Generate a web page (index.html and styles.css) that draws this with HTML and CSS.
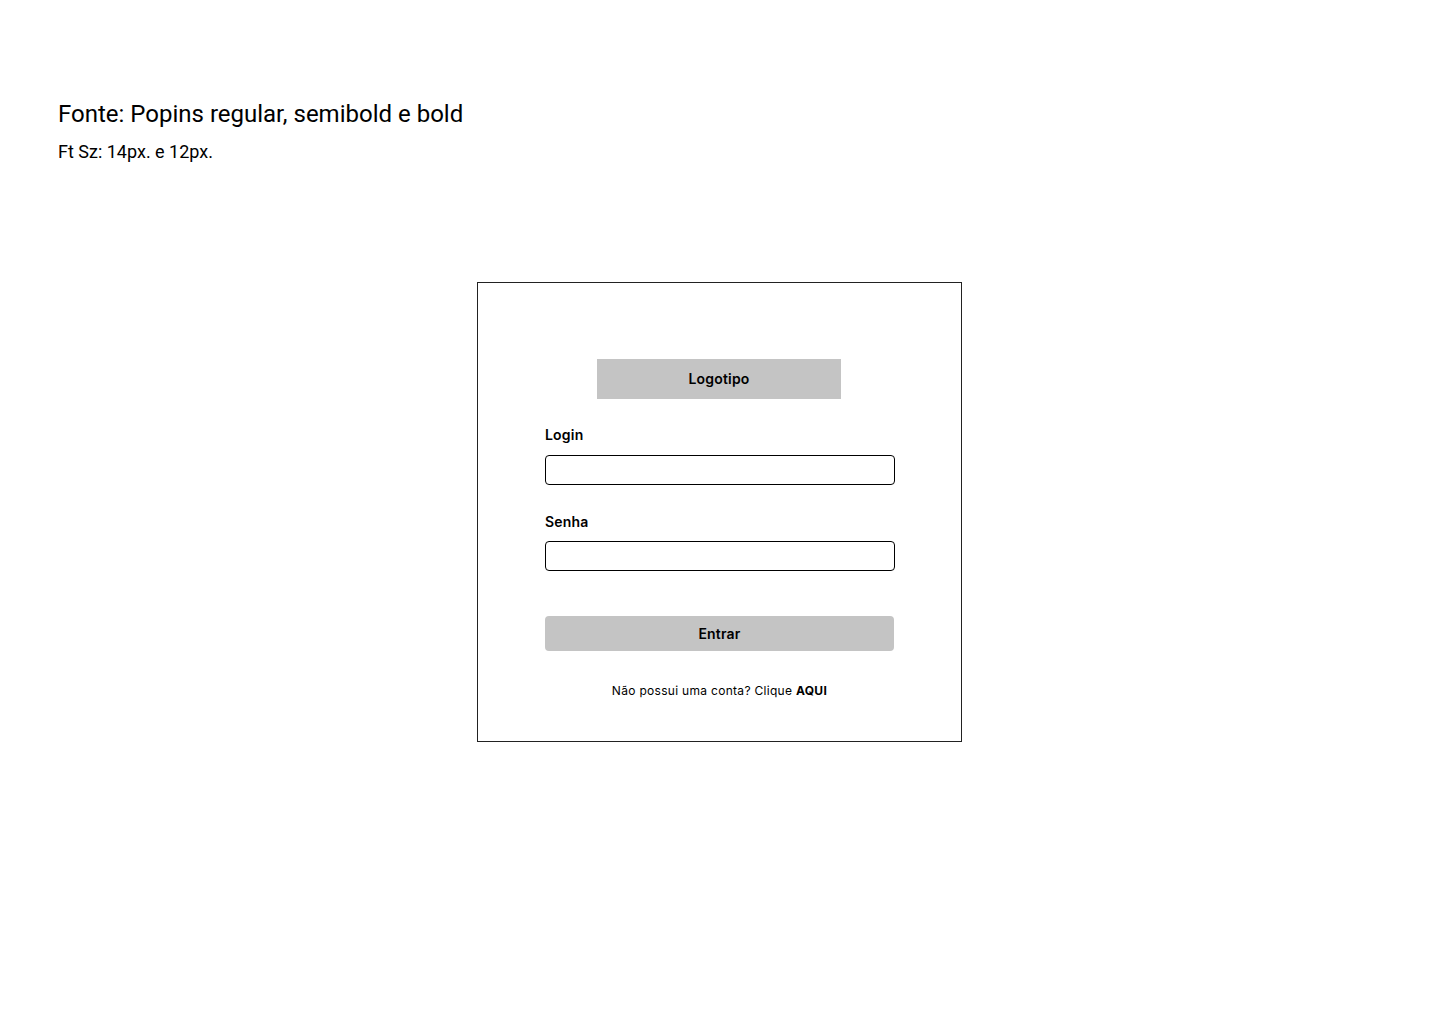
FILE: index.html
```html
<!DOCTYPE html>
<html lang="pt-BR">
<head>
<meta charset="utf-8">
<title>Login</title>
<link rel="stylesheet" href="styles.css">
</head>
<body>
  <header class="notes">
    <h1 class="notes-title">Fonte: Popins regular, semibold e bold</h1>
    <p class="notes-sub">Ft Sz: 14px. e 12px.</p>
  </header>
  <main class="card">
    <div class="logo">Logotipo</div>
    <form class="form">
      <label class="label" for="login">Login</label>
      <input class="input" id="login" type="text">
      <label class="label label-second" for="senha">Senha</label>
      <input class="input" id="senha" type="password">
      <button class="btn" type="button">Entrar</button>
    </form>
    <p class="signup">Não possui uma conta? Clique <strong>AQUI</strong></p>
  </main>
</body>
</html>
```
FILE: styles.css
```css
* { box-sizing: border-box; }
html, body { margin: 0; padding: 0; background: #fff; }
body { font-family: Inter, "Noto Sans", sans-serif; color: #000; }

.notes { padding: 100px 58px 0; font-family: Roboto, "Liberation Sans", sans-serif; }
.notes-title { margin: 0; font-size: 24px; line-height: 28px; font-weight: 400; }
.notes-sub { margin: 13px 0 0; font-size: 18px; line-height: 21px; font-weight: 400; }

.card {
  width: 485px;
  margin: 120px 0 0 calc(50% - 243px);
  border: 1px solid #222;
  padding: 76px 0 41px;
  display: flex;
  flex-direction: column;
  align-items: center;
}
.logo {
  width: 244px;
  height: 40px;
  margin-right: 1px;
  background: #c4c4c4;
  display: flex;
  align-items: center;
  justify-content: center;
  font-size: 14px;
  font-weight: 600;
  letter-spacing: 0.2px;
  padding-bottom: 1px;
}
.form { width: 350px; display: flex; flex-direction: column; margin: 25px 0 0 1px; }
.label { font-size: 14px; line-height: 21px; font-weight: 600; letter-spacing: 0.2px; }
.label-second { margin-top: 26px; margin-bottom: -1px; }
.input {
  margin-top: 10px;
  width: 350px;
  height: 30px;
  border: 1px solid #000;
  border-radius: 4px;
  background: #fff;
  font: inherit;
  padding: 0 8px;
}
.btn {
  margin-top: 45px;
  width: 349px;
  height: 35px;
  border: 0;
  border-radius: 4px;
  background: #c4c4c4;
  font-family: inherit;
  font-size: 14px;
  font-weight: 600;
  letter-spacing: 0.2px;
  color: #000;
  padding: 0 0 1px;
}
.signup { margin: 31px 0 0; font-size: 12px; line-height: 18px; font-weight: 400; letter-spacing: 0.3px; text-align: center; }
.signup strong { font-weight: 700; }
```
